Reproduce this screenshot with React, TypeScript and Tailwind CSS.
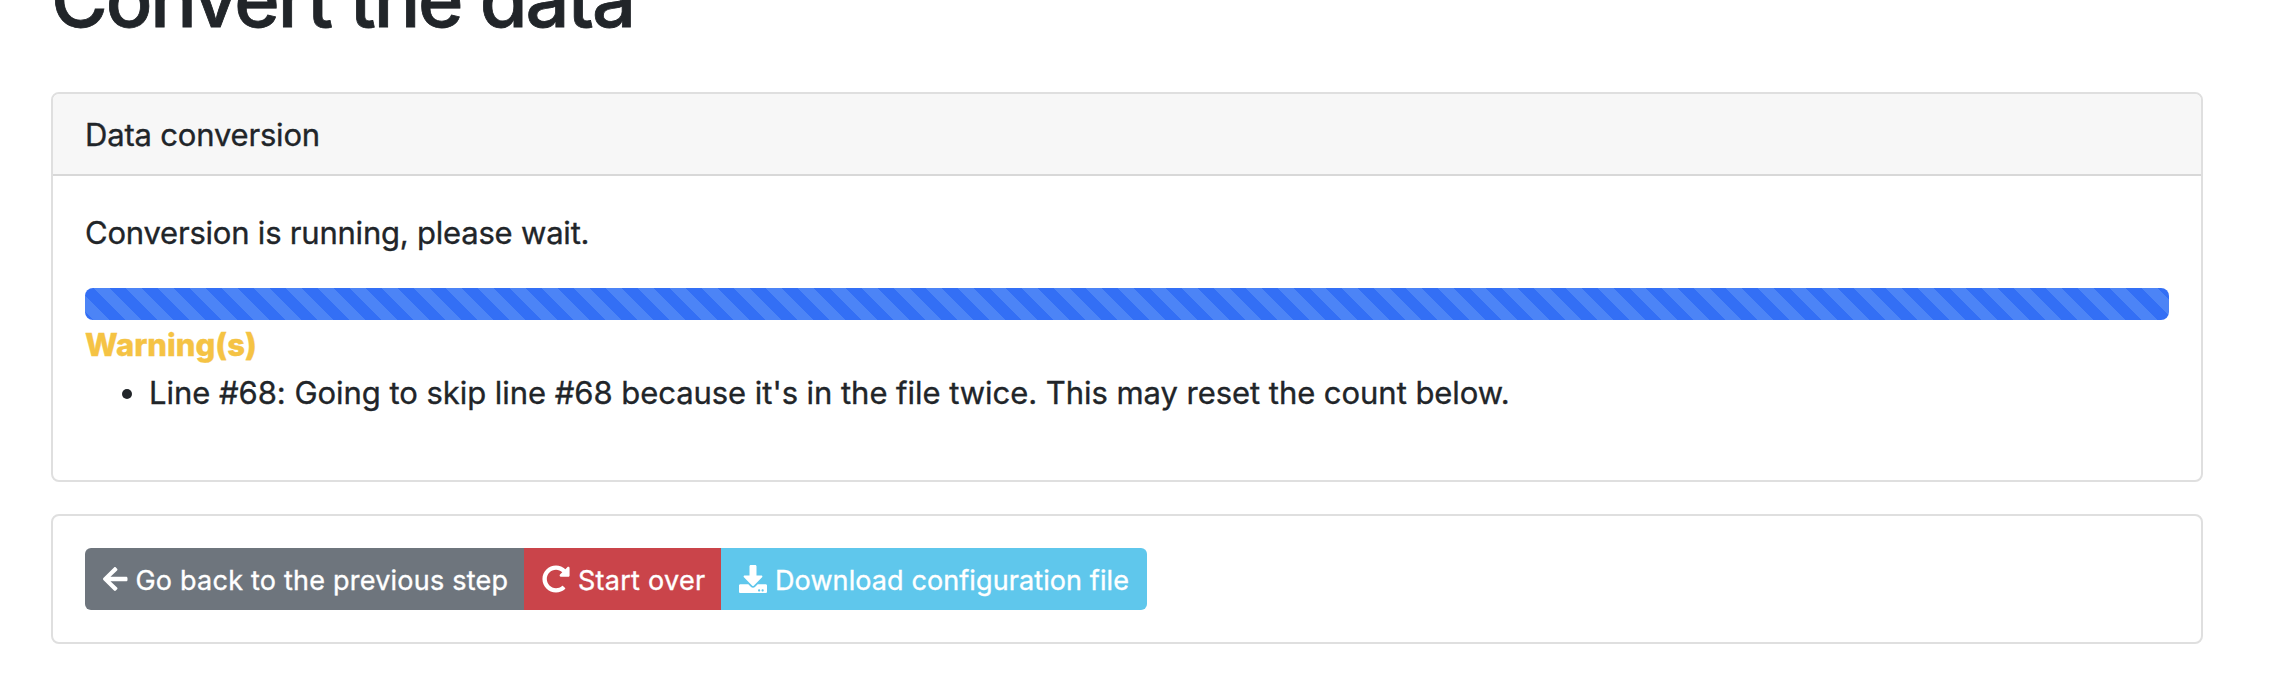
import type { ReactNode } from "react";
import { FaArrowLeft, FaDownload, FaRedoAlt } from "react-icons/fa";

function Card({ title, children }: { title?: string; children: ReactNode }) {
  return (
    <section className="overflow-hidden rounded-lg border-2 border-[#dfdfdf] bg-white">
      {title && (
        <header className="h-[82px] border-b-2 border-[#d8d8d8] bg-[#f7f7f7] px-8 pt-[17px] tracking-[-0.18px]">
          {title}
        </header>
      )}
      <div className="p-8">{children}</div>
    </section>
  );
}

export default function App() {
  return (
    <main className="h-[698px] overflow-hidden bg-white pr-[69px] pl-[51px] font-['Inter',sans-serif] text-[31px] leading-[48px] text-[#212529] [-webkit-text-stroke:0.35px]">
      <h1 className="-mt-[49px] mb-[45px] text-[77.5px] leading-[96px] font-medium tracking-[-2.2px] [-webkit-text-stroke:0.8px]">
        Convert the data
      </h1>

      <div className="flex flex-col gap-8">
        <Card title="Data conversion">
          <p className="mb-[31px] pt-px tracking-[-0.21px]">Conversion is running, please wait.</p>
          <div
            role="progressbar"
            className="h-8 rounded-lg bg-[#336ff5] bg-[linear-gradient(45deg,#4c84f6_25%,transparent_25%,transparent_50%,#4c84f6_50%,#4c84f6_75%,transparent_75%,transparent)] bg-[length:32px_32px] bg-[position:8px_0]"
          />
          <strong className="block pt-px font-extrabold text-[#f5c344]">Warning(s)</strong>
          <ul className="mb-[31px] list-disc pl-16">
            <li className="tracking-[-0.045px]">
              Line #68: Going to skip line #68 because it's in the file twice. This may reset the count below.
            </li>
          </ul>
        </Card>

        <Card>
          <div className="flex h-[62px] w-[1062px] overflow-hidden rounded-md text-[27px] leading-[42px] whitespace-nowrap text-white">
            <button className="flex w-[439px] items-center gap-2 bg-[#6e757d] pl-[18px]">
              <FaArrowLeft className="h-7 w-[24.5px] shrink-0" />
              <span className="pt-1 tracking-[0.22px]">Go back to the previous step</span>
            </button>
            <button className="flex w-[197px] items-center gap-2 bg-[#ca444a] pl-[18px]">
              <FaRedoAlt className="size-7 shrink-0" />
              <span className="pt-1 tracking-[0.27px]">Start over</span>
            </button>
            <button className="flex w-[426px] items-center gap-2 bg-[#5fc7ec] pl-[18px]">
              <FaDownload className="size-7 shrink-0" />
              <span className="pt-1 tracking-[0.1px]">Download configuration file</span>
            </button>
          </div>
        </Card>
      </div>
    </main>
  );
}
